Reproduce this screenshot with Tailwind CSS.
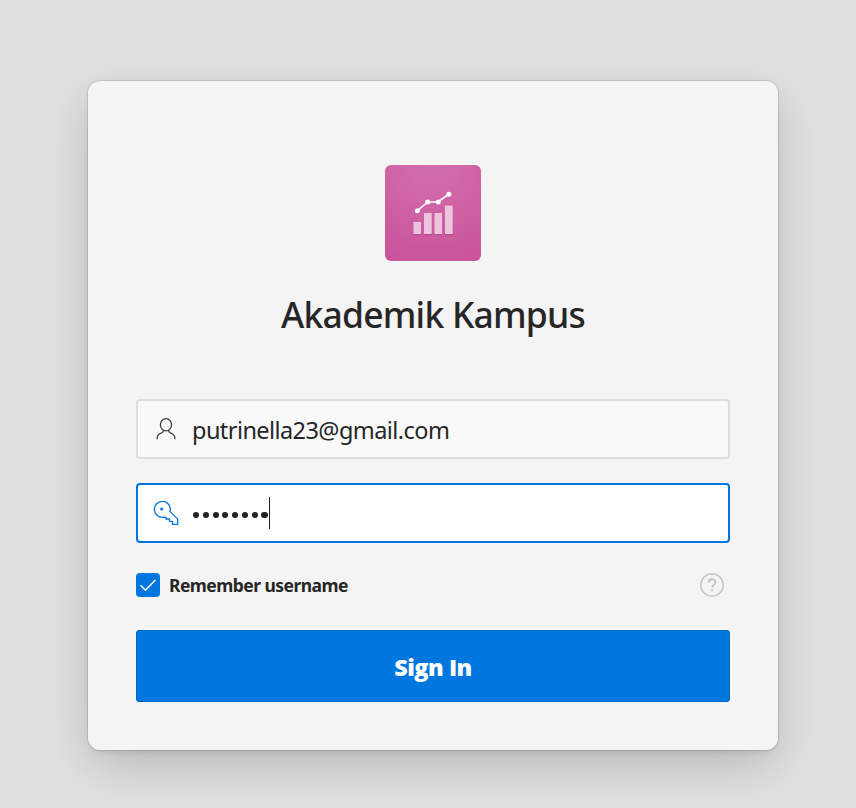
<!DOCTYPE html>
<html lang="id">
<head>
<meta charset="utf-8">
<title>Akademik Kampus</title>
<script src="https://cdn.jsdelivr.net/npm/@tailwindcss/browser@4"></script>
</head>
<body class="h-[808px] overflow-hidden bg-[#e0e0e0] pt-[81px] pl-[88px] font-['Noto_Sans','Open_Sans',sans-serif] text-[#262626]">
<main class="flex h-[669px] w-[690px] flex-col items-center rounded-xl bg-[#f4f4f4] px-12 pt-[84px] shadow-[0_0_0_1px_rgba(0,0,0,0.1),0_16px_48px_-4px_rgba(0,0,0,0.2),0_4px_8px_-4px_rgba(0,0,0,0.15)]">
  <div class="flex size-24 shrink-0 items-center justify-center rounded-[6px] bg-[radial-gradient(circle_at_50%_0%,#d36fae_0%,#c9529a_100%)]">
    <svg class="size-24" viewBox="0 0 96 96">
      <g fill="#000" opacity=".12"><path d="M28 69h8v1.500h-8zM39 69h8v1.500h-8zM49 69h8v1.500h-8zM60 69h8v1.500h-8z"/></g>
      <g fill="#edc3de"><path d="M28.500 57h7.500v12h-7.500zM39 48h7.700v21H39zM49.500 48h7.500v21h-7.500zM60 40.500h7.700V69H60z"/></g>
      <path d="M32.500 45.500 42.700 37H53l11-8" fill="none" stroke="#fff" stroke-width="1.600"/>
      <g fill="#fff"><circle cx="32.400" cy="45.700" r="2.500"/><circle cx="42.700" cy="36.900" r="2.500"/><circle cx="53.300" cy="36.900" r="2.500"/><circle cx="63.900" cy="29.300" r="2.500"/></g>
    </svg>
  </div>
  <h1 class="mt-[29px] h-12 shrink-0 text-[35.500px] leading-[48px] font-medium tracking-[-0.800px] whitespace-nowrap">Akademik Kampus</h1>
  <div class="mt-[61px] flex h-[60px] w-[594px] shrink-0 items-center rounded-[4px] border-2 border-[#dedede] bg-[#f9f9f9] pl-4">
    <svg class="mt-0.5 mr-[14px] size-6 shrink-0" viewBox="0 0 24 24" fill="none" stroke="#404040" stroke-width="1.300"><ellipse cx="12" cy="6.800" rx="5.600" ry="6.100"/><path d="M9.400 12.200c.3 1.500-.2 2-1.700 2.600-2.500.9-4.500 2-4.500 4.800v1.600M14.600 12.200c-.3 1.500.2 2 1.700 2.600 2.500.9 4.500 2 4.500 4.800v1.600"/></svg>
    <span class="mt-0.5 text-[23.500px] leading-8 tracking-[-0.570px] whitespace-nowrap">putrinella23@gmail.com</span>
  </div>
  <div class="mt-6 flex h-[60px] w-[594px] shrink-0 items-center rounded-[4px] border-2 border-[#0076df] bg-white pl-[15px]">
    <svg class="mt-px mr-[13px] size-[26px] shrink-0" viewBox="0 0 26 26" fill="none" stroke="#0076df" stroke-width="1.300"><path d="M17.300 9.200A8 8 0 1 0 11 16.200l2 .2v1.600h3.500v2.300h3v3h5.200v-5.200l-8-8z" stroke-linejoin="round"/><circle cx="8.600" cy="8" r="1.500" fill="#0076df" stroke="none"/></svg>
    <div class="mt-1 flex gap-[3.700px] pl-[1px]">
      <i class="size-[6.100px] rounded-full bg-[#222]"></i><i class="size-[6.100px] rounded-full bg-[#222]"></i><i class="size-[6.100px] rounded-full bg-[#222]"></i><i class="size-[6.100px] rounded-full bg-[#222]"></i><i class="size-[6.100px] rounded-full bg-[#222]"></i><i class="size-[6.100px] rounded-full bg-[#222]"></i><i class="size-[6.100px] rounded-full bg-[#222]"></i><i class="size-[6.100px] rounded-full bg-[#222]"></i>
    </div>
    <span class="ml-[1.300px] h-8 w-px bg-[#222]"></span>
  </div>
  <div class="mt-[30px] flex h-6 w-[594px] shrink-0 items-center">
    <span class="size-6 shrink-0 rounded-[4px] bg-[#0076df]"><svg class="size-6" viewBox="0 0 24 24" fill="none" stroke="#fff" stroke-width="1.500"><path d="m4.500 12.300 5 5L19.300 7"/></svg></span>
    <span class="ml-[9px] text-[17.500px] leading-6 font-bold tracking-[-0.540px] whitespace-nowrap">Remember username</span>
    <svg class="mr-[6px] mb-px ml-auto size-6" viewBox="0 0 24 24" fill="none" stroke="#c4c4c4" stroke-width="1.400"><circle cx="12" cy="11.900" r="11.200"/><path d="M8.800 9.700c0-4.700 6.600-4.300 6.600-.4 0 2.500-3.200 2.400-3.200 5.200" stroke-width="2"/><path d="M12.200 16.300v2" stroke-width="2"/></svg>
  </div>
  <button class="mt-[33px] h-[72px] w-[594px] shrink-0 rounded-[4px] bg-[#0076df] pt-0.5 font-['Open_Sans',sans-serif] text-[23.500px] leading-8 font-extrabold tracking-[-0.500px] text-white shadow-[inset_0_0_0_1px_#0069c6]">Sign In</button>
</main>
</body>
</html>
